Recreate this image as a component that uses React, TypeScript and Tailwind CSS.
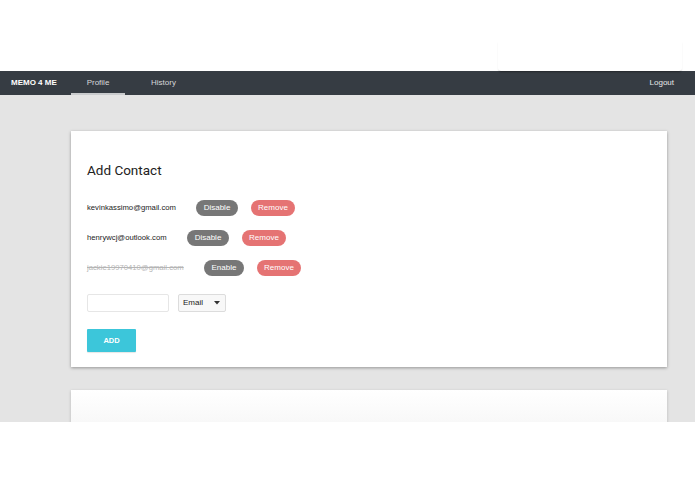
import React from "react";

const font = { fontFamily: '"Liberation Sans", Arial, sans-serif' };

function Pill({ label, kind, w }: { label: string; kind: "gray" | "red"; w: string }) {
  return (
    <span
      className={
        "inline-flex h-[16px] items-center justify-center rounded-full text-[8px] text-white " +
        w +
        (kind === "gray" ? " bg-[#777777]" : " bg-[#e57373]")
      }
    >
      {label}
    </span>
  );
}

function Row({
  email,
  action,
  emailW,
  struck,
}: {
  email: string;
  action: string;
  emailW: string;
  struck?: boolean;
}) {
  return (
    <div className="flex h-[16px] items-center">
      <span
        className={
          "text-[7.7px] " +
          emailW +
          (struck ? " text-[#b5b5b5] line-through" : " text-[#222]")
        }
      >
        {email}
      </span>
      <div className="flex items-center gap-[13px]">
        <Pill label={action} kind="gray" w={action === "Enable" ? "w-[40px]" : "w-[42px]"} />
        <Pill label="Remove" kind="red" w="w-[44px]" />
      </div>
    </div>
  );
}

export default function App() {
  return (
    <div className="w-[695px] h-[494px] overflow-hidden bg-white" style={font}>
      <div className="relative h-[71px] bg-white">
        <div className="absolute left-[498px] top-[40px] h-[31px] w-[184px] rounded-b-[3px] bg-white shadow-[0_2px_2px_-1px_rgba(0,0,0,0.35)]" />
      </div>
      <nav className="flex h-[24px] items-stretch bg-[#363c43] text-[8px]">
        <div className="flex w-[71px] items-center pl-[11px] font-bold text-white">MEMO 4 ME</div>
        <div className="flex w-[54px] items-center justify-center border-b-2 border-[#c9cbcd] pt-[2px] text-[#d6d7d9]">
          Profile
        </div>
        <div className="flex items-center pl-[26px] text-[#d6d7d9]">History</div>
        <div className="ml-auto flex items-center pr-[21px] text-[#e6e7e8]">Logout</div>
      </nav>
      <main className="h-[327px] overflow-hidden bg-[#e4e4e4] pt-[36px] pl-[71px]">
        <section className="h-[236px] w-[596px] bg-white pl-[16px] pt-[30px] shadow-[0_1px_3px_rgba(0,0,0,0.35)]">
          <h2
            className="text-[13.5px] leading-[18px] text-[#222]"
            style={{ fontFamily: 'Roboto, "Liberation Sans", sans-serif' }}
          >
            Add Contact
          </h2>
          <div className="mt-[21px] flex flex-col gap-[14px]">
            <Row email="kevinkassimo@gmail.com" action="Disable" emailW="w-[109px]" />
            <Row email="henrywcj@outlook.com" action="Disable" emailW="w-[100px]" />
            <Row email="jackie19970410@gmail.com" action="Enable" emailW="w-[117px]" struck />
          </div>
          <div className="mt-[18px] flex items-center gap-[9px]">
            <div className="h-[18px] w-[82px] rounded-[2px] border border-[#e6e6e6] bg-white" />
            <div className="flex h-[18px] w-[48px] items-center justify-between rounded-[2px] border border-[#dcdcdc] bg-[#f8f8f8] pl-[4px] pr-[5px] text-[8px] text-[#222]">
              <span>Email</span>
              <svg width="6" height="4" viewBox="0 0 6 4">
                <path d="M0 0 L6 0 L3 3.5 Z" fill="#333" />
              </svg>
            </div>
          </div>
          <button className="mt-[17px] flex h-[23px] w-[49px] items-center justify-center rounded-[1px] bg-[#3cc6da] text-[7.5px] font-bold text-white shadow-[0_1px_1px_rgba(0,0,0,0.1)]">
            ADD
          </button>
        </section>
        <section className="mt-[23px] h-[60px] w-[596px] bg-gradient-to-b from-white to-[#f2f2f2] shadow-[0_1px_3px_rgba(0,0,0,0.2)]" />
      </main>
    </div>
  );
}
